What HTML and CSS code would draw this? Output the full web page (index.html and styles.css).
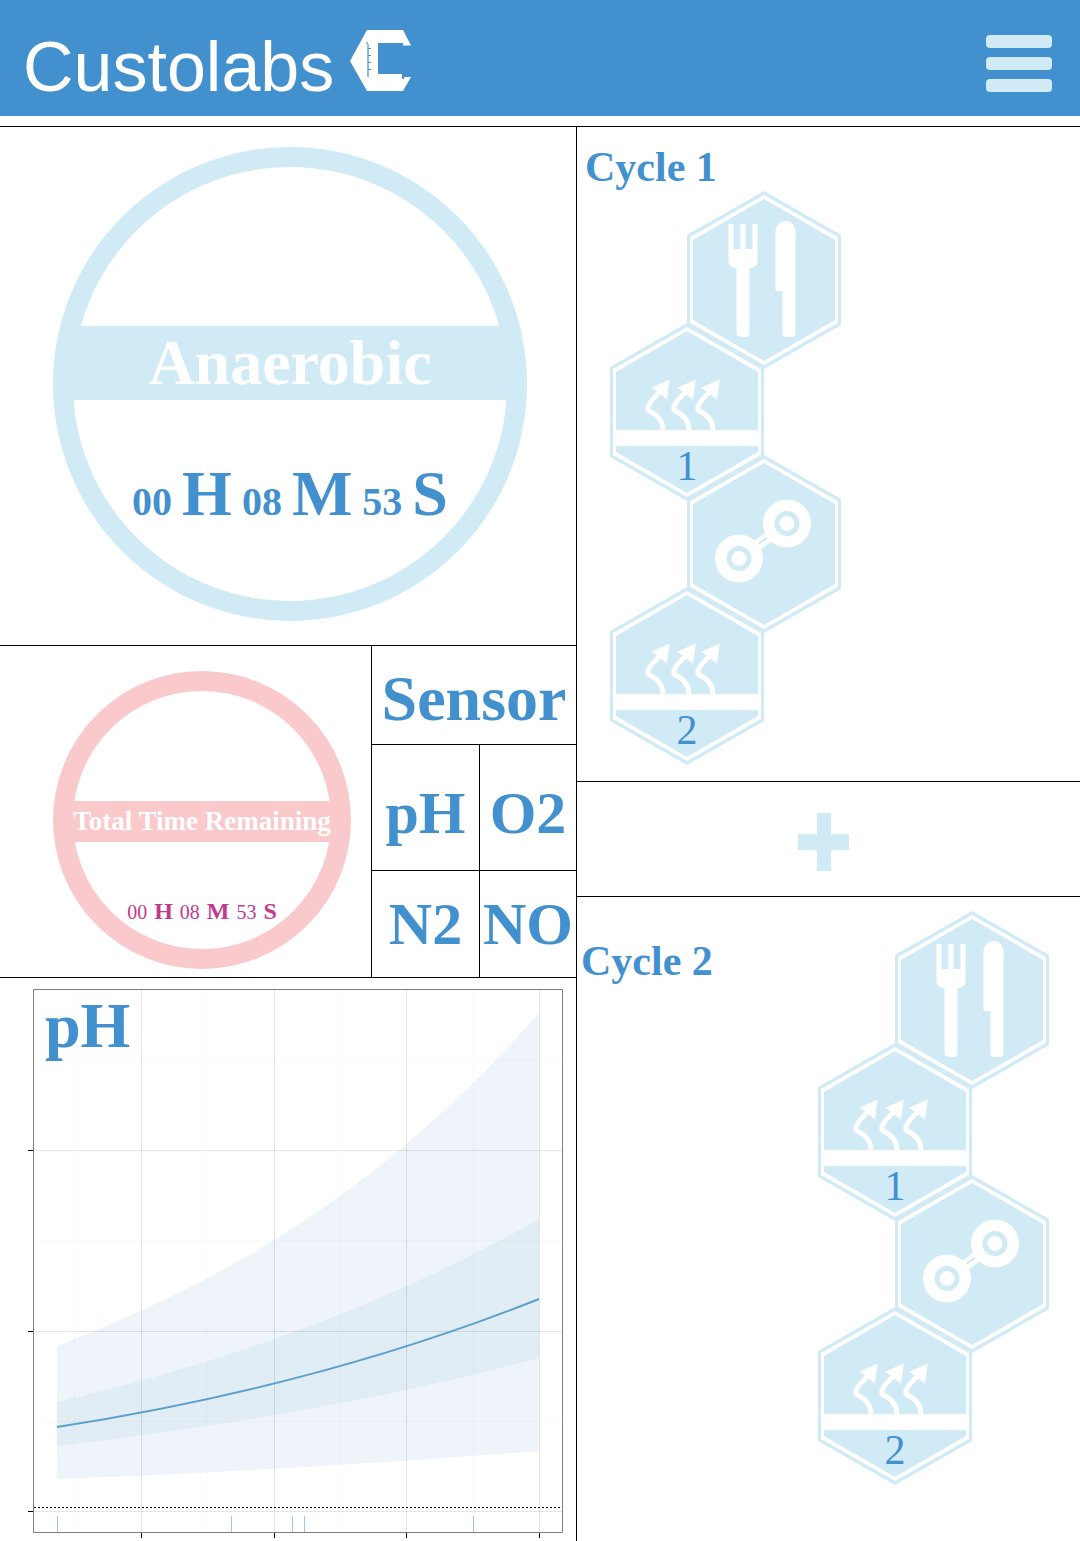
FILE: index.html
```html
<!DOCTYPE html>
<html lang="en">
<head>
<meta charset="utf-8">
<meta name="viewport" content="width=device-width, initial-scale=1">
<title>Custolabs</title>
<link rel="stylesheet" href="styles.css">
</head>
<body>
<svg class="sprite" aria-hidden="true">
  <symbol id="hex" viewBox="0 0 156 178">
    <path class="tint" d="M78 0 155 44V134L78 178 1 134V44Z"/>
    <path class="blank" d="M78 4 152 46V132L78 174 4 132V46Z"/>
    <path class="tint" d="M78 8 149 49V129L78 170 7 129V49Z"/>
  </symbol>
  <symbol id="feed" viewBox="0 0 156 178">
    <use href="#hex"/>
    <path class="blank" d="M42.500 33h5v25h7V33h5v25h7V33h5v38q0 5-8 6v65q0 4-4 4h-5q-4 0-4-4V77q-8-1-8-6Z"/>
    <path class="blank" d="M89.500 40a10 10 0 0 1 20 0v102q0 4-4 4h-5q-4 0-4-4V100h-7Z"/>
  </symbol>
  <symbol id="arrow" viewBox="0 0 156 178">
    <path class="stem" d="M54 108C54 97 47 91 40 88C36 84 43 76 53 67"/>
    <path class="blank" d="M60.500 56.500 42 65 49 69 58 77Z"/>
  </symbol>
  <symbol id="steam" viewBox="0 0 156 178">
    <use href="#hex"/>
    <use href="#arrow"/>
    <use href="#arrow" x="26"/>
    <use href="#arrow" x="50"/>
    <path class="blank" d="M6 107H150V123H6Z"/>
  </symbol>
  <symbol id="mix" viewBox="0 0 156 178">
    <use href="#hex"/>
    <path class="link-wide" d="M53 103.500 101 68.500"/>
    <circle class="blank" cx="53" cy="103.500" r="24"/>
    <circle class="blank" cx="101" cy="68.500" r="24"/>
    <circle class="ring" cx="53" cy="103.500" r="10"/>
    <circle class="ring" cx="101" cy="68.500" r="10"/>
    <path class="link-gap" d="M72.500 89 81 82.500"/>
  </symbol>
</svg>

<header class="topbar">
  <a class="brand" href="#">Custolabs
    <svg class="brand-mark" viewBox="0 0 61 61" aria-hidden="true">
      <path fill="#fff" d="M17 0H53L61 15.500H53V13H28V44H52V49H53.500L54.500 47H61L53 61H17L0 31Z"/>
      <path fill="none" stroke="#4390cf" d="M18 14V47M17 12V14M18 18.500H21M18 25.500H21M18 32.500H21M18 39.500H21" stroke-width="1.200"/>
    </svg>
  </a>
  <button class="menu" type="button" aria-label="Menu">
    <span class="menu-bar"></span>
    <span class="menu-bar"></span>
    <span class="menu-bar"></span>
  </button>
</header>

<main class="board">
  <div class="status">
    <section class="stage">
      <div class="dial dial-stage">
        <h1 class="dial-band">Anaerobic</h1>
        <p class="timer"><span>00</span><b>H</b><span>08</span><b>M</b><span>53</span><b>S</b></p>
      </div>
    </section>

    <div class="middle">
      <section class="total">
        <div class="dial dial-total">
          <h2 class="dial-band">Total Time Remaining</h2>
          <p class="timer"><span>00</span><b>H</b><span>08</span><b>M</b><span>53</span><b>S</b></p>
        </div>
      </section>
      <section class="sensors">
        <h2 class="sensors-title">Sensor</h2>
        <button class="sensor sensor-upper" type="button">pH</button>
        <button class="sensor sensor-upper" type="button">O2</button>
        <button class="sensor" type="button">N2</button>
        <button class="sensor" type="button">NO</button>
      </section>
    </div>

    <section class="chart">
      <svg class="chart-plot" viewBox="0 978 576 563" role="img" aria-label="pH over time">
        <path class="band-outer" d="M57 1346C218 1283 378 1197 539 1013V1451C378 1463 218 1473 57 1479Z"/>
        <path class="band-inner" d="M57 1402C218 1364 378 1310 539 1219V1358C378 1401 218 1427 57 1446Z"/>
        <path class="grid-minor" d="M74.500 990V1532M207.500 990V1532M340.500 990V1532M473.500 990V1532M34 1060.500H562M34 1240.500H562M34 1421.500H562"/>
        <path class="grid-major" d="M141.500 990V1532M274.500 990V1532M406.500 990V1532M539.500 990V1532M34 1150.500H562M34 1331.500H562M34 1511.500H562"/>
        <path class="trend" d="M57 1427C218 1402 378 1363 539 1299"/>
        <path class="rug" d="M57.500 1516V1532M231.500 1516V1532M292.500 1516V1532M304.500 1516V1532M473.500 1516V1532"/>
        <path class="limit" d="M34 1507.500H562"/>
        <path class="frame" d="M33.500 989.500H562.500V1532.500H33.500Z"/>
        <path class="tick" d="M28 1150.500H33M28 1331.500H33M28 1511.500H33M141.500 1533V1538M274.500 1533V1538M406.500 1533V1538M539.500 1533V1538"/>
      </svg>
      <h2 class="chart-title">pH</h2>
    </section>
  </div>

  <div class="cycles">
    <section class="cycle">
      <h2 class="cycle-title">Cycle 1</h2>
      <ol class="steps">
        <li class="step step-right"><svg class="hexagon" viewBox="0 0 156 178" role="img" aria-label="Feed"><use href="#feed"/></svg></li>
        <li class="step"><svg class="hexagon" viewBox="0 0 156 178"><use href="#steam"/><text class="hex-number" x="78" y="157">1</text></svg></li>
        <li class="step step-right"><svg class="hexagon" viewBox="0 0 156 178" role="img" aria-label="Mix"><use href="#mix"/></svg></li>
        <li class="step"><svg class="hexagon" viewBox="0 0 156 178"><use href="#steam"/><text class="hex-number" x="78" y="157">2</text></svg></li>
      </ol>
    </section>

    <button class="add" type="button" aria-label="Add cycle">
      <svg class="add-icon" viewBox="0 0 51 58" aria-hidden="true"><path class="tint" d="M19 0H33V21H51V37H33V58H19V37H0V21H19Z"/></svg>
    </button>

    <section class="cycle cycle-split">
      <h2 class="cycle-title">Cycle 2</h2>
      <ol class="steps">
        <li class="step step-right"><svg class="hexagon" viewBox="0 0 156 178" role="img" aria-label="Feed"><use href="#feed"/></svg></li>
        <li class="step"><svg class="hexagon" viewBox="0 0 156 178"><use href="#steam"/><text class="hex-number" x="78" y="157">1</text></svg></li>
        <li class="step step-right"><svg class="hexagon" viewBox="0 0 156 178" role="img" aria-label="Mix"><use href="#mix"/></svg></li>
        <li class="step"><svg class="hexagon" viewBox="0 0 156 178"><use href="#steam"/><text class="hex-number" x="78" y="157">2</text></svg></li>
      </ol>
    </section>
  </div>
</main>
</body>
</html>
```

FILE: styles.css
```css
:root {
  --blue: #4390cf;
  --pale: #d0eaf6;
  --pink: #f9c9cc;
  --magenta: #c13a8e;
  --line: #000;
}

* {
  box-sizing: border-box;
}

body {
  margin: 0;
  background: #fff;
  color: var(--blue);
  font-family: "Liberation Serif", "Times New Roman", serif;
}

h1,
h2,
p,
ol {
  margin: 0;
  padding: 0;
}

button {
  margin: 0;
  padding: 0;
  border: 0;
  background: none;
  color: inherit;
  font: inherit;
  cursor: pointer;
}

svg {
  display: block;
}

.sprite {
  display: none;
}

.tint { fill: var(--pale); }
.blank { fill: #fff; }
.stem { fill: none; stroke: #fff; stroke-width: 5; }
.ring { fill: none; stroke: var(--pale); stroke-width: 5; }
.link-wide { stroke: #fff; stroke-width: 11; }
.link-gap { fill: none; stroke: var(--pale); stroke-width: 2; }

/* Header */

.topbar {
  display: flex;
  justify-content: space-between;
  align-items: flex-start;
  padding: 30px 28px 14px 23px;
  background: var(--blue);
}

.brand {
  display: flex;
  align-items: baseline;
  gap: 16px;
  color: #fff;
  font: 70px/70px "Liberation Sans", Arial, sans-serif;
  text-decoration: none;
}

.brand-mark {
  width: 61px;
  height: 61px;
}

.menu {
  display: flex;
  flex-direction: column;
  gap: 9px;
  padding-top: 5px;
}

.menu-bar {
  width: 66px;
  height: 13px;
  border-radius: 4px;
  background: var(--pale);
}

/* Board */

.board {
  display: grid;
  grid-template-columns: 8fr 7fr;
  margin-top: 10px;
  border-top: 1px solid var(--line);
}

.cycles {
  border-left: 1px solid var(--line);
}

/* Dials */

.stage {
  padding: 20px 49px 24px 53px;
}

.dial {
  aspect-ratio: 1;
  border: 20px solid var(--pale);
  border-radius: 50%;
}

.dial-band {
  display: flex;
  justify-content: center;
  align-items: center;
  background: var(--pale);
  color: #fff;
  white-space: nowrap;
}

.timer {
  display: flex;
  justify-content: center;
  align-items: baseline;
  font-weight: bold;
}

.dial-stage {
  padding-top: 159px;
}

.dial-stage .dial-band {
  height: 74px;
  font-size: 64px;
}

.dial-stage .timer {
  gap: 10px;
  margin-top: 62px;
  font-size: 40px;
  line-height: 64px;
}

.dial-stage b {
  font-size: 64px;
}

.middle {
  display: grid;
  grid-template-columns: 371fr 205fr;
  border-top: 1px solid var(--line);
  border-bottom: 1px solid var(--line);
}

.total {
  padding: 25px 20px 8px 53px;
}

.dial-total {
  padding-top: 110px;
  border-color: var(--pink);
}

.dial-total .dial-band {
  height: 41px;
  background: var(--pink);
  font-size: 27px;
}

.dial-total .timer {
  gap: 7px;
  margin-top: 57px;
  color: var(--magenta);
  font-size: 20px;
  font-weight: normal;
  line-height: 24px;
}

.dial-total b {
  font-size: 24px;
}

/* Sensors */

.sensors {
  display: grid;
  grid-template-columns: 107fr 97fr;
  grid-template-rows: 98px 126px 1fr;
  border-left: 1px solid var(--line);
}

.sensors-title {
  grid-column: 1 / -1;
  padding-top: 21px;
  font-size: 64px;
  line-height: 64px;
  text-align: center;
}

.sensor {
  border-top: 1px solid var(--line);
  font-size: 60px;
  font-weight: bold;
  line-height: 60px;
}

.sensor:nth-of-type(even) {
  border-left: 1px solid var(--line);
}

.sensor-upper {
  padding-top: 10px;
}

/* Chart */

.chart {
  display: grid;
}

.chart-plot,
.chart-title {
  grid-area: 1 / 1;
}

.chart-plot {
  width: 100%;
}

.chart-title {
  padding: 16px 0 0 45px;
  font-size: 64px;
  line-height: 64px;
}

.band-outer { fill: #eff4fb; }
.band-inner { fill: #e1edf5; }
.grid-minor { stroke: #000; stroke-opacity: 0.02; }
.grid-major { stroke: #000; stroke-opacity: 0.1; }
.trend { fill: none; stroke: #5b9fcd; stroke-width: 2; }
.rug { stroke: #9ecae1; }
.limit { stroke: #000; stroke-dasharray: 2 2; }
.frame { fill: none; stroke: #7f7f7f; }
.tick { stroke: #000; }

/* Cycles */

.cycle {
  padding: 16px 30px 16px 8px;
}

.cycle-title {
  font-size: 42px;
  line-height: 48px;
}

.cycle .steps {
  margin-left: 24px;
  list-style: none;
}

.cycle-split {
  display: flex;
  justify-content: space-between;
  align-items: flex-start;
  padding: 14px 30px 56px 4px;
  border-top: 1px solid var(--line);
}

.cycle-split .cycle-title {
  padding-top: 26px;
}

.step {
  width: 156px;
}

.step + .step {
  margin-top: -46px;
}

.step-right {
  margin-left: 77px;
}

.hexagon {
  width: 156px;
  height: 178px;
}

.hex-number {
  fill: var(--blue);
  font-size: 42px;
  text-anchor: middle;
}

.add {
  display: flex;
  justify-content: center;
  width: 100%;
  padding: 31px 10px 25px 0;
  border-top: 1px solid var(--line);
}

.add-icon {
  width: 51px;
  height: 58px;
}
```
